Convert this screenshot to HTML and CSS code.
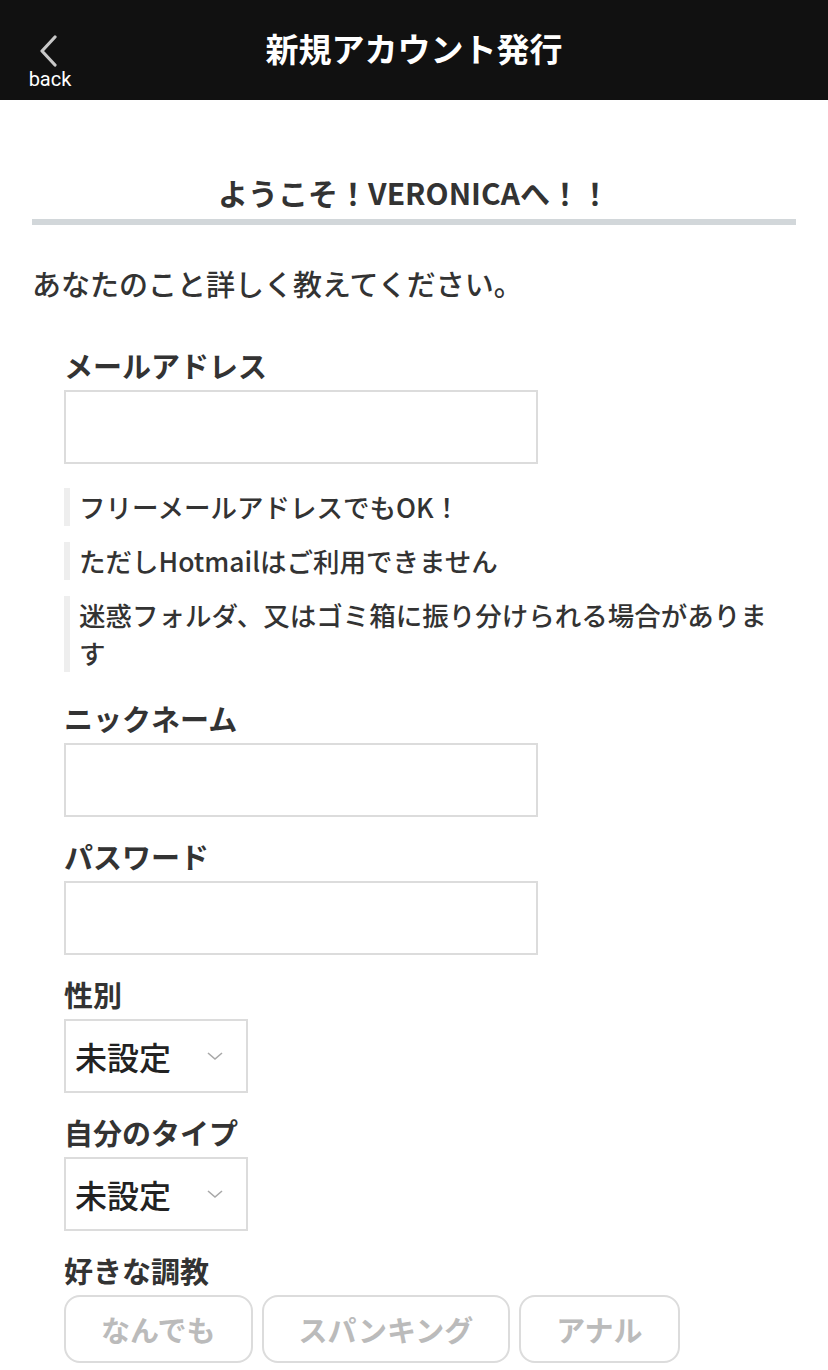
FILE: index.html
```html
<!DOCTYPE html>
<html lang="ja">
<head>
    <meta charset="UTF-8">
    <meta name="viewport" content="width=device-width, initial-scale=1.0">
    <title>新規アカウント発行</title>
    <link rel="stylesheet" href="styles.css">
</head>
<body>

    <header class="topbar">
        <a class="back" href="#">
            <svg class="back-icon" width="22" height="32" viewBox="0 0 22 32">
                <path d="M18 2 L5 16 L18 30" fill="none" stroke="#c8c8c8" stroke-width="3.2" stroke-linecap="round" stroke-linejoin="round"/>
            </svg>
            <span class="back-text">back</span>
        </a>
        <h1 class="title">新規アカウント発行</h1>
        <span></span>
    </header>

    <main class="page">
        <h2 class="welcome">ようこそ！VERONICAへ！！</h2>
        <p class="lead">あなたのこと詳しく教えてください。</p>

        <form class="form">
            <label class="label">メールアドレス</label>
            <input class="field" type="email">

            <ul class="notes">
                <li>フリーメールアドレスでもOK！</li>
                <li>ただしHotmailはご利用できません</li>
                <li>迷惑フォルダ、又はゴミ箱に振り分けられる場合があります</li>
            </ul>

            <label class="label">ニックネーム</label>
            <input class="field" type="text">

            <label class="label">パスワード</label>
            <input class="field" type="password">

            <label class="label">性別</label>
            <div class="select">
                <span>未設定</span>
                <svg width="18" height="12" viewBox="0 0 18 12"><path d="M2 3 L9 9 L16 3" fill="none" stroke="#a8a8a8" stroke-width="1.6"/></svg>
            </div>

            <label class="label">自分のタイプ</label>
            <div class="select">
                <span>未設定</span>
                <svg width="18" height="12" viewBox="0 0 18 12"><path d="M2 3 L9 9 L16 3" fill="none" stroke="#a8a8a8" stroke-width="1.6"/></svg>
            </div>

            <label class="label">好きな調教</label>
            <div class="chips">
                <button type="button" class="chip">なんでも</button>
                <button type="button" class="chip">スパンキング</button>
                <button type="button" class="chip">アナル</button>
            </div>
        </form>
    </main>

</body>
</html>
```

FILE: styles.css
```css
* {
    margin: 0;
    padding: 0;
    box-sizing: border-box;
    font-family: "Noto Sans CJK JP", "Noto Sans", sans-serif;
}

body {
    background: #fff;
    color: #333;
}

.topbar {
    height: 100px;
    background: #111;
    display: grid;
    grid-template-columns: 1fr auto 1fr;
    align-items: center;
}

.back {
    display: flex;
    flex-direction: column;
    align-items: center;
    width: 48px;
    margin-left: 26px;
    margin-top: 26px;
    text-decoration: none;
}

.back-icon {
    margin-right: 4px;
}

.back-text {
    color: #fff;
    font-family: Roboto, "Liberation Sans", sans-serif;
    font-size: 20px;
    line-height: 24px;
}

.title {
    color: #fff;
    font-size: 33px;
    font-weight: 700;
    margin-top: -4px;
}

.page {
    padding: 73px 32px 0;
}

.welcome {
    text-align: center;
    font-size: 30px;
    font-weight: 700;
    line-height: 38px;
    padding-bottom: 8px;
    border-bottom: 6px solid #d2d7da;
}

.lead {
    margin-top: 38px;
    font-size: 29px;
    font-weight: 500;
    line-height: 40px;
}

.form {
    display: flex;
    flex-direction: column;
    align-items: flex-start;
    padding: 42px 20px 0 32px;
}

.label {
    font-size: 29px;
    font-weight: 700;
    line-height: 40px;
    margin-bottom: 5px;
}

.field {
    width: 474px;
    height: 74px;
    border: 2px solid #dcdcdc;
    margin-bottom: 19px;
    font-size: 28px;
    padding: 0 10px;
}

.notes {
    list-style: none;
    margin-top: 5px;
    margin-bottom: 10px;
}

.notes li {
    border-left: 6px solid #eee;
    padding-left: 9px;
    font-size: 26.5px;
    font-weight: 500;
    line-height: 38px;
    margin-bottom: 16px;
}

.select {
    width: 184px;
    height: 74px;
    border: 2px solid #dcdcdc;
    display: flex;
    align-items: center;
    justify-content: space-between;
    padding: 0 22px 0 9px;
    margin-bottom: 19px;
    font-size: 32px;
    font-weight: 500;
    color: #222;
}

.chips {
    display: flex;
    gap: 9px;
}

.chip {
    height: 68px;
    padding: 0 35px;
    background: #fff;
    border: 2px solid #dcdcdc;
    border-radius: 16px;
    color: #bbb;
    font-size: 29px;
    font-weight: 700;
}
```
